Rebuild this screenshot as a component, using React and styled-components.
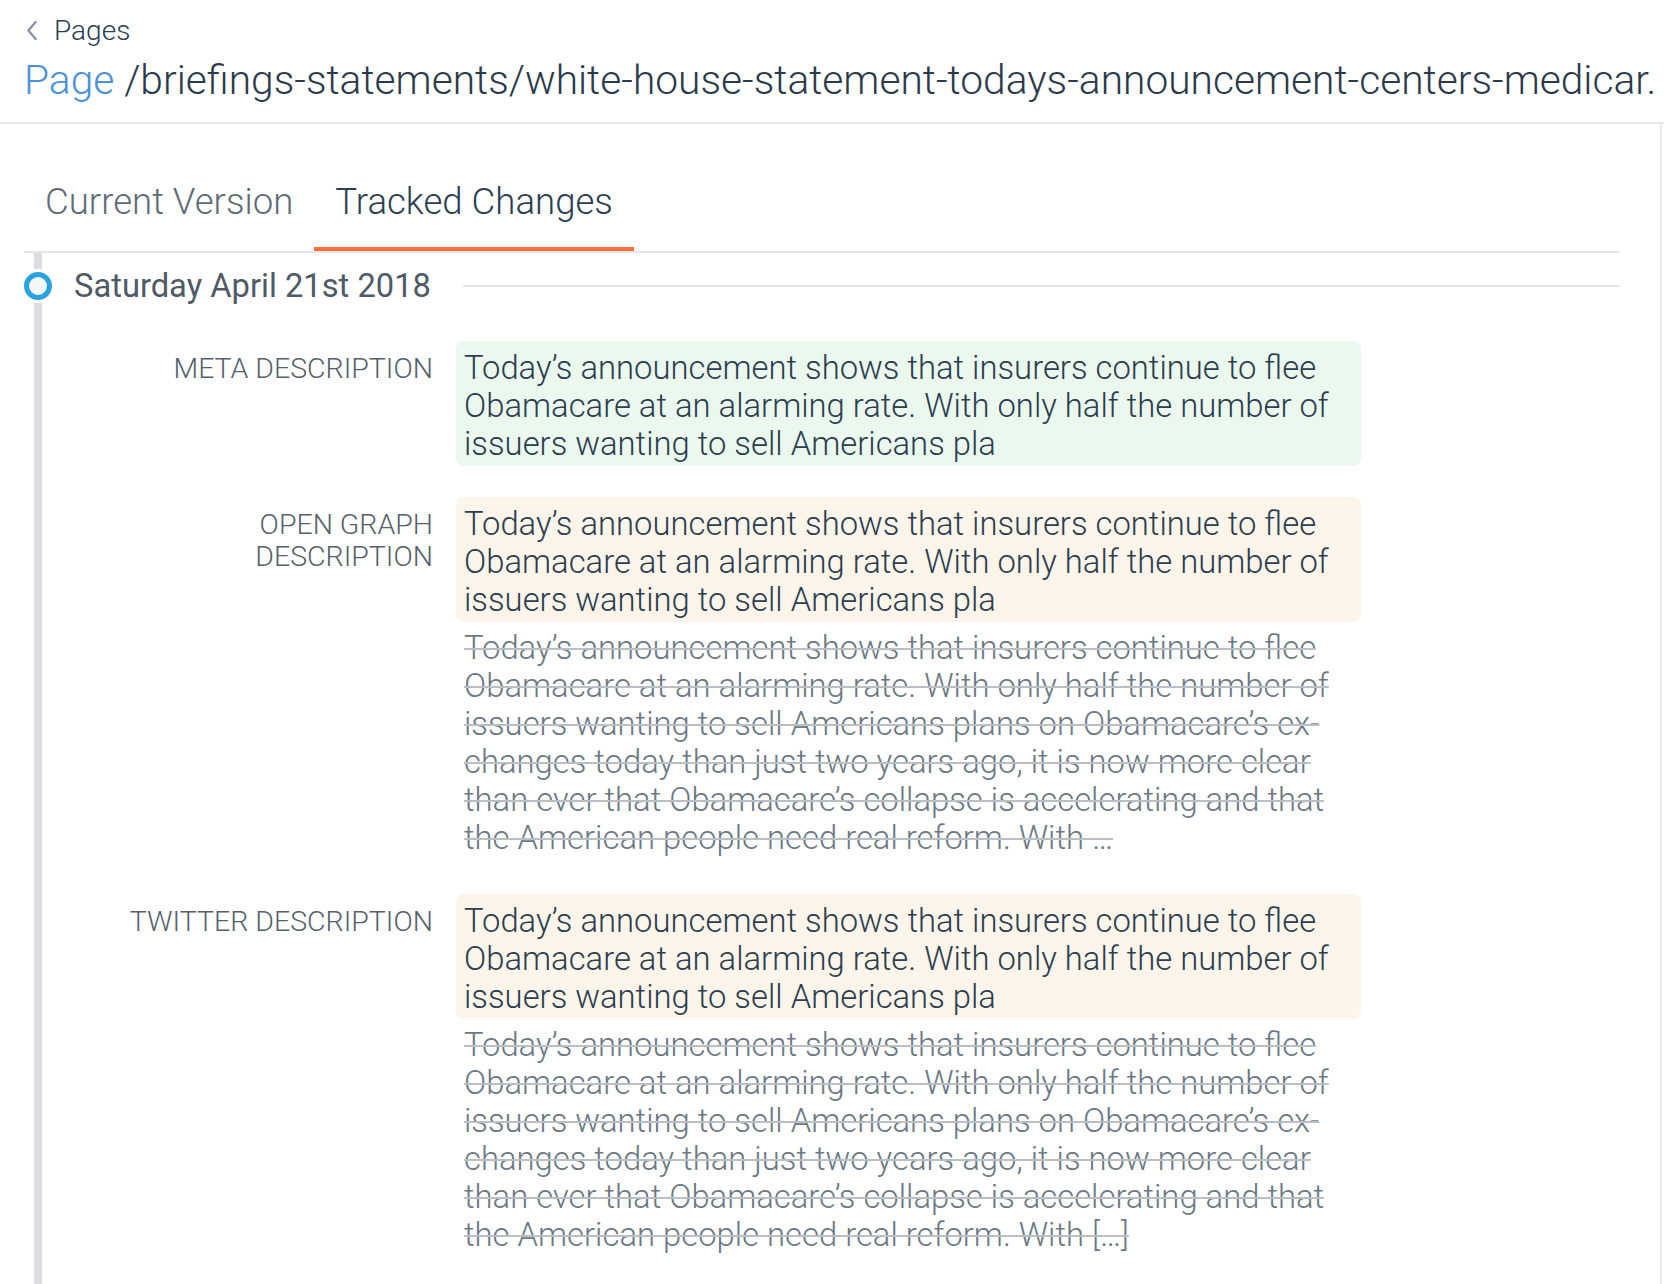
import styled, { createGlobalStyle } from "styled-components";

const GlobalStyle = createGlobalStyle`
	html, body {
		margin: 0;
		padding: 0;
		background: #ffffff;
	}
	body {
		font-family: Roboto, "Noto Sans", "Liberation Sans", sans-serif;
		color: #2c3e50;
		-webkit-font-smoothing: antialiased;
	}
`;

const LIGHT = `"Roboto Light", Roboto, "Noto Sans", "Liberation Sans", sans-serif`;

const CURRENT = [
	"Today’s announcement shows that insurers continue to flee",
	"Obamacare at an alarming rate. With only half the number of",
	"issuers wanting to sell Americans pla",
];

const PREVIOUS = [
	"Today’s announcement shows that insurers continue to flee",
	"Obamacare at an alarming rate. With only half the number of",
	"issuers wanting to sell Americans plans on Obamacare’s ex-",
	"changes today than just two years ago, it is now more clear",
	"than ever that Obamacare’s collapse is accelerating and that",
];

const FIELDS = [
	{ label: ["META DESCRIPTION"], kind: "added" },
	{
		label: ["OPEN GRAPH", "DESCRIPTION"],
		kind: "changed",
		removed: [...PREVIOUS, "the American people need real reform. With …"],
	},
	{
		label: ["TWITTER DESCRIPTION"],
		kind: "changed",
		removed: [...PREVIOUS, "the American people need real reform. With […]"],
	},
];

export default function App() {
	return (
		<>
			<GlobalStyle />
			<Header>
				<BackLink>
					<Chevron viewBox="0 0 12 20" aria-hidden="true">
						<path d="M10 2 3 10l7 8" />
					</Chevron>
					Pages
				</BackLink>
				<Title>
					<span className="kind">Page</span>{" "}
					/briefings-statements/white-house-statement-todays-announcement-centers-medicar.
				</Title>
			</Header>

			<Panel>
				<Tabs>
					<Tab>Current Version</Tab>
					<Tab $active>Tracked Changes</Tab>
				</Tabs>

				<Timeline>
					<DateRow>
						<Dot />
						<DateText>Saturday April 21st 2018</DateText>
						<Rule />
					</DateRow>

					<Fields>
						{FIELDS.map((f) => (
							<Field key={f.label.join(" ")}>
								<Label>
									{f.label.map((l) => (
										<span key={l}>{l}</span>
									))}
								</Label>
								<Values>
									<Added $kind={f.kind}>
										{CURRENT.map((l) => (
											<Line key={l}>{l}</Line>
										))}
									</Added>
									{f.removed && (
										<Removed>
											{f.removed.map((l) => (
												<Line key={l}>{l}</Line>
											))}
										</Removed>
									)}
								</Values>
							</Field>
						))}
					</Fields>
				</Timeline>
			</Panel>
		</>
	);
}

const Header = styled.header`
	padding: 14px 0 18px 24px;
	border-bottom: 2px solid #e8e8e8;
	overflow: hidden;
`;

const BackLink = styled.div`
	display: flex;
	align-items: center;
	gap: 16px;
	height: 32px;
	font-family: ${LIGHT};
	font-size: 28px;
	font-weight: 300;
	color: #2c3e50;
`;

const Chevron = styled.svg`
	width: 13px;
	height: 21px;
	margin-left: 1px;
	fill: none;
	stroke: #8592a0;
	stroke-width: 2.2;
	stroke-linecap: round;
	stroke-linejoin: round;
`;

const Title = styled.h1`
	margin: 10px 0 0;
	font-family: ${LIGHT};
	font-size: 40.7px;
	line-height: 48px;
	font-weight: 300;
	color: #2b3a4a;
	white-space: nowrap;

	.kind {
		color: #4a90d9;
	}
`;

const Panel = styled.main`
	min-height: calc(100vh - 124px);
	width: 1662px;
	box-sizing: border-box;
	border-right: 2px solid #e8e8e8;
	padding: 58px 40px 0 24px;
	display: flex;
	flex-direction: column;
`;

const Tabs = styled.nav`
	display: flex;
	border-bottom: 2px solid #e6e6e6;
`;

const Tab = styled.button`
	all: unset;
	padding: 0 21px 25px;
	font-family: ${LIGHT};
	font-size: 36.6px;
	line-height: 40px;
	font-weight: 300;
	color: ${(p) => (p.$active ? "#2c3e50" : "#5f6b77")};
	border-bottom: 4px solid ${(p) => (p.$active ? "#ff6d3b" : "transparent")};
	cursor: pointer;
`;

const Timeline = styled.section`
	flex: 1;
	margin-left: 10px;
	border-left: 8px solid #dcdde3;
	padding: 10px 0 30px;
`;

const DateRow = styled.div`
	display: flex;
	align-items: center;
	height: 46px;
`;

const Dot = styled.span`
	flex: none;
	width: 18px;
	height: 18px;
	margin-left: -18px;
	margin-right: 22px;
	border-radius: 50%;
	border: 5px solid #2aa3e0;
	background: #f4f7fa;
	box-shadow: 0 0 0 3px #ffffff;
	box-sizing: content-box;
`;

const DateText = styled.h2`
	margin: 0;
	font-size: 32.7px;
	font-weight: 400;
	color: #4e5a66;
	white-space: nowrap;
`;

const Rule = styled.span`
	flex: 1;
	height: 2px;
	background: #e6e6e6;
	margin-left: 32px;
`;

const Fields = styled.div`
	margin-top: 32px;
	display: flex;
	flex-direction: column;
	gap: 31px;
`;

const Field = styled.div`
	display: grid;
	grid-template-columns: 391px 905px;
	column-gap: 23px;
`;

const Label = styled.div`
	display: flex;
	flex-direction: column;
	align-items: flex-end;
	padding-top: 12px;
	font-family: ${LIGHT};
	font-size: 28.5px;
	line-height: 32px;
	font-weight: 300;
	color: #55606b;
`;

const Values = styled.div`
	display: flex;
	flex-direction: column;
`;

const Added = styled.div`
	padding: 8px 8px 3px;
	border-radius: 8px;
	background: ${(p) => (p.$kind === "added" ? "#ebf8ee" : "#fef5ea")};
	font-family: ${LIGHT};
	font-size: 32.8px;
	line-height: 38px;
	font-weight: 300;
	color: #2c3e50;
`;

const Removed = styled.div`
	padding: 7px 8px 6px;
	font-family: ${LIGHT};
	font-size: 32.8px;
	line-height: 38px;
	font-weight: 300;
	color: #6c7883;
	text-decoration: line-through;
	text-decoration-color: #b9bfc5;
	text-decoration-thickness: 2px;
`;

const Line = styled.span`
	display: block;
	white-space: nowrap;
`;
